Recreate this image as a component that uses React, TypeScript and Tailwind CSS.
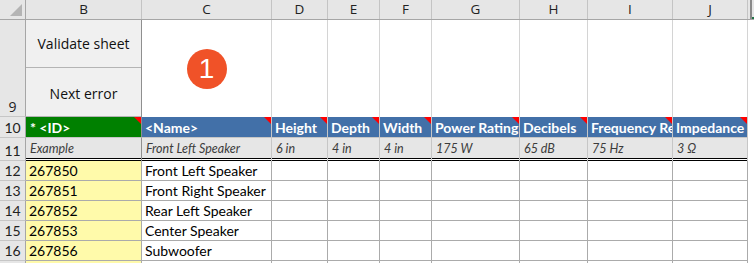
import React from 'react';

const cols = [
  { key: 'B', w: 'w-[116px]' },
  { key: 'C', w: 'w-[130px]' },
  { key: 'D', w: 'w-[56px]' },
  { key: 'E', w: 'w-[52px]' },
  { key: 'F', w: 'w-[52px]' },
  { key: 'G', w: 'w-[88px]' },
  { key: 'H', w: 'w-[68px]' },
  { key: 'I', w: 'w-[85px]' },
  { key: 'J', w: 'w-[75px]' },
];

const headers = ['<Name>', 'Height', 'Depth', 'Width', 'Power Rating', 'Decibels', 'Frequency Response', 'Impedance'];
const examples = ['Front Left Speaker', '6 in', '4 in', '4 in', '175 W', '65 dB', '75 Hz', '3 Ω'];
const rows = [
  { n: 12, id: '267850', name: 'Front Left Speaker' },
  { n: 13, id: '267851', name: 'Front Right Speaker' },
  { n: 14, id: '267852', name: 'Rear Left Speaker' },
  { n: 15, id: '267853', name: 'Center Speaker' },
  { n: 16, id: '267856', name: 'Subwoofer' },
];

const cellFont = { fontFamily: 'Lato, "Open Sans", sans-serif' };

const Flag = () => (
  <span className="absolute right-0 top-0 w-[7px] h-[7px] bg-[#ff0000] [clip-path:polygon(0_0,100%_0,100%_100%)]" />
);

const RowHead: React.FC<{ n: number | string; h: string }> = ({ n, h }) => (
  <div className={`w-[26px] ${h} shrink-0 bg-[#e6e6e6] border-r border-r-[#a6a6a6] border-b border-b-[#c6c6c6] flex items-end justify-center text-[14px] text-[#222] leading-[19px]`}>
    {n}
  </div>
);

const App: React.FC = () => {
  return (
    <div className="w-[754px] h-[263px] overflow-hidden bg-white select-none" style={{ fontFamily: '"Open Sans", "Noto Sans", sans-serif' }}>
      {/* column letters */}
      <div className="flex h-[20px] bg-[#e6e6e6] border-b border-b-[#a6a6a6]">
        <div className="w-[26px] shrink-0 border-r border-r-[#a6a6a6] relative">
          <span className="absolute right-[3px] bottom-[3px] w-[12px] h-[12px] bg-[#b4b4b4] [clip-path:polygon(100%_0,100%_100%,0_100%)]" />
        </div>
        {cols.map((c) => (
          <div key={c.key} className={`${c.w} shrink-0 border-r border-r-[#c4c4c4] flex items-center justify-center text-[13.5px] text-[#222]`}>
            {c.key}
          </div>
        ))}
        <div className="flex-1 flex">
          <div className="w-[2px] bg-[#e6e6e6]" />
          <div className="w-[2px] bg-[#8a8a8a]" />
          <div className="flex-1 flex items-end">
            <div className="w-full h-[2px] bg-[#217346]" />
          </div>
        </div>
      </div>

      {/* row 9: buttons */}
      <div className="flex h-[97px]">
        <RowHead n={9} h="h-[97px]" />
        <div className="w-[116px] shrink-0 flex flex-col border-r border-r-[#8f8f8f] text-[14px] text-[#111]">
          <div className="h-[48px] bg-[#f0f0f0] border-b border-b-[#b4b4b4] flex items-center justify-center">Validate sheet</div>
          <div className="flex-1 bg-[#f0f0f0] border-b border-b-[#b4b4b4] flex items-center justify-center pt-[2px]">Next error</div>
        </div>
        <div className="w-[130px] shrink-0 border-r border-r-[#d4d4d4] flex items-center justify-center">
          <div className="w-[40px] h-[40px] rounded-full bg-[#f05228] flex items-center justify-center text-white text-[28px] leading-none" style={{ fontFamily: '"Liberation Sans", Arial, sans-serif' }}>
            1
          </div>
        </div>
        {cols.slice(2).map((c) => (
          <div key={c.key} className={`${c.w} shrink-0 border-r border-r-[#d4d4d4]`} />
        ))}
      </div>

      {/* row 10: headers */}
      <div className="flex h-[21px]" style={cellFont}>
        <RowHead n={10} h="h-[21px]" />
        <div className="w-[116px] shrink-0 relative bg-[#008000] border-b border-b-[#c6c6c6] border-r border-r-[#8f8f8f] text-white font-bold text-[14px] px-[4px] flex items-end leading-[19px]">
          * &lt;ID&gt;
          <Flag />
        </div>
        {headers.map((h, i) => (
          <div
            key={h}
            className={`${cols[i + 1].w} shrink-0 relative bg-[#4270a8] border-b border-b-[#c6c6c6] border-r border-r-[#c6c6c6] text-white font-bold text-[14px] px-[3px] flex items-end whitespace-nowrap overflow-hidden leading-[19px]`}
          >
            {h}
            <Flag />
          </div>
        ))}
      </div>

      {/* row 11: example */}
      <div className="flex h-[23px]" style={cellFont}>
        <RowHead n={11} h="h-[23px]" />
        {cols.map((c, i) => (
          <div key={c.key} className={`${c.w} shrink-0 h-[23px] flex flex-col ${i === 0 ? 'border-r border-r-[#8f8f8f]' : 'border-r border-r-[#c6c6c6]'}`}>
            <div className="h-[20px] bg-[#e6e6e6] italic text-[#3c3c3c] text-[12.5px] px-[4px] flex items-end leading-[18px] whitespace-nowrap overflow-hidden">
              {i === 0 ? 'Example' : examples[i - 1]}
            </div>
            <div className="h-[1px] bg-black" />
            <div className="h-[1px] bg-white" />
            <div className="h-[1px] bg-black" />
          </div>
        ))}
      </div>

      {/* data rows */}
      {rows.map((r) => (
        <div key={r.n} className="flex h-[20px]" style={cellFont}>
          <RowHead n={r.n} h="h-[20px]" />
          <div className="w-[116px] shrink-0 bg-[#fffaaa] border-b border-b-[#ababab] border-r border-r-[#ababab] text-[14px] text-black px-[3px] flex items-end leading-[19px]">
            {r.id}
          </div>
          <div className="w-[130px] shrink-0 border-b border-b-[#ababab] border-r border-r-[#ababab] text-[14px] text-black px-[3px] flex items-end leading-[19px] whitespace-nowrap overflow-hidden">
            {r.name}
          </div>
          {cols.slice(2).map((c) => (
            <div key={c.key} className={`${c.w} shrink-0 border-b border-b-[#ababab] border-r border-r-[#ababab]`} />
          ))}
        </div>
      ))}

      {/* row 17 */}
      <div className="flex h-[20px]">
        <RowHead n="" h="h-[20px]" />
        <div className="w-[116px] shrink-0 bg-[#fffaaa] border-r border-r-[#ababab]" />
        {cols.slice(1).map((c) => (
          <div key={c.key} className={`${c.w} shrink-0 border-r border-r-[#ababab]`} />
        ))}
      </div>
    </div>
  );
};

export default App;
